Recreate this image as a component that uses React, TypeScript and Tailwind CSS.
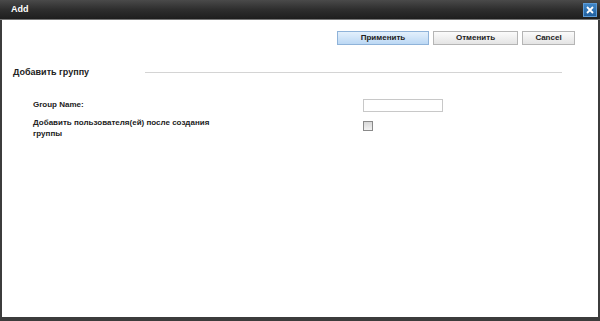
export default function App() {
  return (
    <div className="w-[600px] h-[321px] bg-[#3c3c3c] p-[2px] pt-0 flex flex-col font-['Liberation_Sans',Arial,sans-serif]">
      {/* title bar */}
      <div className="h-[20px] -mx-[2px] flex items-center justify-between px-[11px] pr-[3px] bg-gradient-to-b from-[#4a4a4a] via-[#2e2e2e] to-[#1e1e1e] border-b border-[#777]">
        <span className="text-white text-[9px] font-bold">Add</span>
        <button className="w-[14px] h-[14px] bg-gradient-to-b from-[#3f86c8] to-[#21609f] border border-[#5d9bd6] flex items-center justify-center">
          <svg width="8" height="8" viewBox="0 0 8 8">
            <path d="M1 1 L7 7 M7 1 L1 7" stroke="white" strokeWidth="1.8" />
          </svg>
        </button>
      </div>

      <div className="flex-1 bg-white mb-[2px] pt-[11px]">
        <div className="flex justify-end gap-[4px] pr-[23px]">
          <button className="w-[92px] h-[14px] text-[8px] font-bold text-[#222] border border-[#8fb3d9] bg-gradient-to-b from-[#e3f0fc] to-[#bcd8f4]">
            Применить
          </button>
          <button className="w-[85px] h-[14px] text-[8px] font-bold text-[#222] border border-[#b5b5b5] bg-gradient-to-b from-[#fbfbfb] to-[#e4e4e4]">
            Отменить
          </button>
          <button className="w-[53px] h-[14px] text-[8px] font-bold text-[#222] border border-[#b5b5b5] bg-gradient-to-b from-[#fbfbfb] to-[#e4e4e4]">
            Cancel
          </button>
        </div>

        <div className="flex items-center mt-[21px] pl-[11px] pr-[36px]">
          <span className="w-[132px] text-[9px] font-bold text-[#222]">Добавить группу</span>
          <div className="flex-1 h-px bg-[#d4d4d4]" />
        </div>

        <div className="mt-[19px] pl-[31px] flex flex-col gap-[5px]">
          <div className="flex items-center">
            <span className="w-[330px] text-[8px] font-bold text-[#222]">Group Name:</span>
            <input className="w-[80px] h-[13px] border border-[#c8c8c8] bg-white" />
          </div>
          <div className="flex items-start">
            <span className="w-[330px] text-[8px] font-bold text-[#222] leading-[11px] pr-[150px]">
              Добавить пользователя(ей) после создания группы
            </span>
            <span className="mt-[4px] w-[10px] h-[10px] border border-[#8a8a8a] bg-gradient-to-b from-[#d8d8d8] to-[#f2f2f2]" />
          </div>
        </div>
      </div>
    </div>
  );
}
